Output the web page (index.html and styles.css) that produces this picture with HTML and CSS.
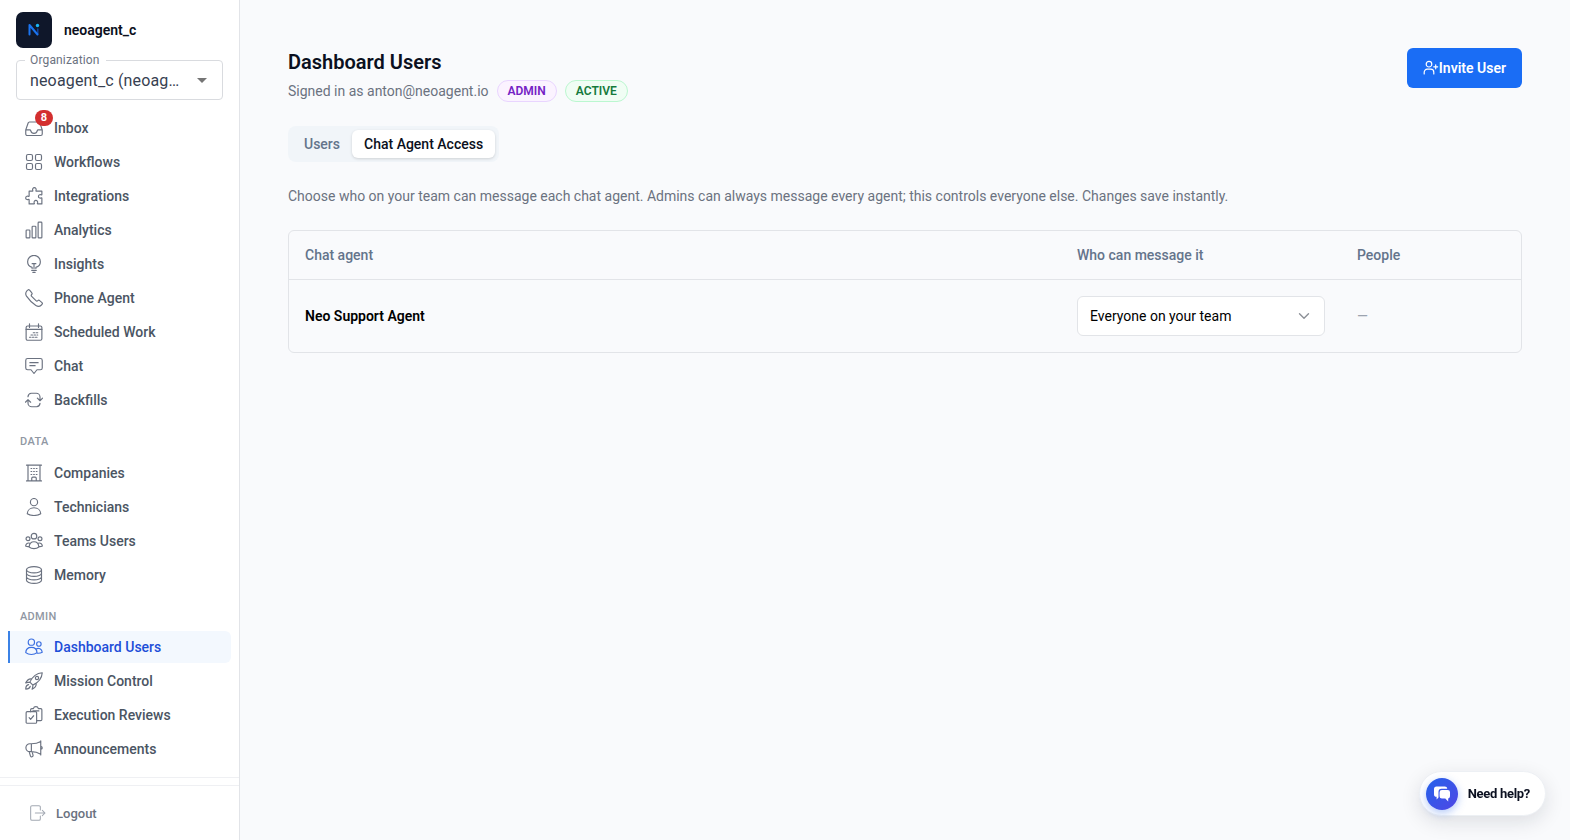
FILE: index.html
```html
<!DOCTYPE html>
<html lang="en">
<head>
  <meta charset="UTF-8">
  <title>Dashboard Users</title>
  <meta name="viewport" content="width=device-width, initial-scale=1.0">
  <link rel="stylesheet" href="styles.css">
</head>
<body>
  <aside class="sidebar">
    <div class="brand">
      <div class="logo">
        <svg width="36" height="36" viewBox="0 0 36 36" fill="none">
          <path d="M21.800 22v-5" stroke="#12409a" stroke-width="1.5"/>
          <path d="M13.500 22.500V13l8 9.500" stroke="#1a74f0" stroke-width="2"/>
          <circle cx="21.500" cy="13.500" r="1.700" fill="#19b5f5" stroke="none"/>
        </svg>
      </div>
      <span class="brand-name">neoagent_c</span>
    </div>

    <div class="org-select">
      <span class="org-label">Organization</span>
      <span class="org-value">neoagent_c (neoag…</span>
      <span class="org-arrow"></span>
    </div>

    <nav class="nav">
      <a class="nav-item">
        <svg class="icon" viewBox="0 0 24 24"><path d="M1 14.500 4.200 5.400A2 2 0 0 1 6 4h12a2 2 0 0 1 1.800 1.400L23 14.500V20a2 2 0 0 1-2 2H3a2 2 0 0 1-2-2zM1 14.500h5.500c.8 0 1 .5 1.200 1.200a4.400 4.400 0 0 0 8.600 0c.2-.7.4-1.200 1.200-1.200H23"/></svg>
        <span class="badge">8</span>
        Inbox
      </a>
      <a class="nav-item">
        <svg class="icon" viewBox="0 0 24 24"><rect x="2" y="2" width="8" height="8" rx="2"/><rect x="14" y="2" width="8" height="8" rx="2"/><rect x="2" y="14" width="8" height="8" rx="2"/><rect x="14" y="14" width="8" height="8" rx="2"/></svg>
        Workflows
      </a>
      <a class="nav-item">
        <svg class="icon" viewBox="0 0 24 24"><path d="M5.500 5.500H10c.7 0 .6-.7.300-1.200a2.400 2.400 0 1 1 4.400 0c-.3.500-.4 1.200.3 1.200h7.500V10c0 .7-.7.600-1.200.3a2.400 2.400 0 1 0 0 4.400c.5-.3 1.200-.4 1.200.3v7.500H17c-.7 0-.6-.7-.3-1.200a2.400 2.400 0 1 0-4.400 0c.3.500.4 1.200-.3 1.200H5.500V17c0-.7-.7-.6-1.200-.3a2.400 2.400 0 1 1 0-4.400c.5.300 1.200.4 1.200-.3z"/></svg>
        Integrations
      </a>
      <a class="nav-item">
        <svg class="icon" viewBox="0 0 24 24"><rect x="1.500" y="12" width="5" height="10.500" rx="1"/><rect x="9.500" y="7" width="5" height="15.500" rx="1"/><rect x="17.500" y="1.500" width="5" height="21" rx="1"/></svg>
        Analytics
      </a>
      <a class="nav-item">
        <svg class="icon" viewBox="0 0 24 24"><path d="M9.500 18v-1.500C6 15.500 3.500 12.500 3.500 9a8.500 8.500 0 0 1 17 0c0 3.500-2.500 6.500-6 7.500V18M12 18v-6M9.500 11.500h5M9 20.500h6M10.500 23.200h3"/></svg>
        Insights
      </a>
      <a class="nav-item">
        <svg class="icon" viewBox="0 0 24 24"><path d="m14.500 22 .1.100a6 6 0 0 0 7.300-.8l.7-.7a1.800 1.800 0 0 0 0-2.500l-3-2.600a1.800 1.800 0 0 0-2.500 0 1.800 1.800 0 0 1-2.500 0L8.900 9.800a1.800 1.800 0 0 1 0-2.500 1.800 1.800 0 0 0 0-2.500L6.100 1.500a1.800 1.800 0 0 0-2.500 0l-.8.700a6 6 0 0 0-.8 7.300A47 47 0 0 0 14.500 22z"/></svg>
        Phone Agent
      </a>
      <a class="nav-item">
        <svg class="icon" viewBox="0 0 24 24"><rect x="1.500" y="4" width="21" height="19" rx="2"/><path d="M1.500 8.500h21M6 1v5M18 1v5"/><path d="M11 13h2M15 13h2M8 16h2M12 16h2M16 16h1M6 19h2M10 19h2M14 19h2"/></svg>
        Scheduled Work
      </a>
      <a class="nav-item">
        <svg class="icon" viewBox="0 0 24 24"><path d="M3.500 2h17A2.500 2.500 0 0 1 23 4.500v10a2.500 2.500 0 0 1-2.500 2.500H16l-4 5-4-5H3.500A2.500 2.500 0 0 1 1 14.500v-10A2.500 2.500 0 0 1 3.500 2zM6.500 7.500h11M6.500 11.500h7"/></svg>
        Chat
      </a>
      <a class="nav-item">
        <svg class="icon" viewBox="0 0 24 24"><path d="M4 7.500A5 5 0 0 1 8.500 3H15a5 5 0 0 1 5 5v4.500M16.500 9.500l3.500 3.500 3.500-3.500M20 16.500a5 5 0 0 1-4.500 4.500H9a5 5 0 0 1-5-5v-4.500M.5 15 4 11.500 7.500 15"/></svg>
        Backfills
      </a>

      <div class="nav-heading">DATA</div>
      <a class="nav-item">
        <svg class="icon" viewBox="0 0 24 24"><path d="M4 1.500v21M20 1.500v21M2 1.500h20M2 22.500h20M9 22.500V19a1.500 1.500 0 0 1 1.500-1.500h3A1.500 1.500 0 0 1 15 19v3.500"/><path d="M8 6h1M11.500 6h1M15 6h1M8 10h1M11.500 10h1M15 10h1M8 14h1M11.500 14h1M15 14h1"/></svg>
        Companies
      </a>
      <a class="nav-item">
        <svg class="icon" viewBox="0 0 24 24"><circle cx="12" cy="5.500" r="4.800"/><path d="M3 21c.3-5 4.300-8 9-8s8.700 3 9 8c-2.500 1.500-5.500 2.300-9 2.300S5.500 22.500 3 21z"/></svg>
        Technicians
      </a>
      <a class="nav-item">
        <svg class="icon" viewBox="0 0 24 24"><circle cx="12" cy="5.500" r="3.700"/><circle cx="4" cy="9" r="2.600"/><circle cx="20" cy="9" r="2.600"/><path d="M5.500 20c.3-4.500 3-7 6.500-7s6.200 2.500 6.500 7c-3.500 3-9.500 3-13 0zM6.300 15C3.500 14 1.300 15.500.8 18.700c1.200.7 2.800 1 4.700.8M17.700 15c2.800-1 5 .5 5.500 3.700-1.200.7-2.800 1-4.700.8"/></svg>
        Teams Users
      </a>
      <a class="nav-item">
        <svg class="icon" viewBox="0 0 24 24"><ellipse cx="12" cy="5" rx="10" ry="4.200"/><path d="M2 5v14c0 2.300 4.500 4.200 10 4.200s10-1.900 10-4.200V5M2 9.700c0 2.300 4.500 4.200 10 4.200s10-1.900 10-4.200M2 14.400c0 2.300 4.500 4.200 10 4.200s10-1.900 10-4.200"/></svg>
        Memory
      </a>

      <div class="nav-heading admin">ADMIN</div>
      <a class="nav-item active">
        <svg class="icon" viewBox="0 0 24 24"><circle cx="8.500" cy="5.500" r="4.200"/><circle cx="18.500" cy="8" r="3"/><path d="M1 19.500c.2-4.500 3.300-7 7.500-7s7.300 2.500 7.500 7c-4 3.300-11 3.300-15 0zM14.500 14.700c4-2.200 8-.3 8.500 4.300-2 1.200-4.300 1.500-7 1.200"/></svg>
        Dashboard Users
      </a>
      <a class="nav-item">
        <svg class="icon" viewBox="0 0 24 24"><path d="M6.500 13.500C10 6 15.500 1.500 23 1c-.5 7.500-5 13-12.500 16.500zM9.200 9.300C6 8.500 3 10.500 1 14.500c2-.8 3.700-1 5.500-1M14.700 14.800c.8 3.200-1.200 6.200-5.200 8.200.8-2 1-3.700 1-5.500M4.800 16.800c-2.500.5-3.800 2.700-3.800 6 3 0 5.300-1.300 6-3.800"/><circle cx="16" cy="8" r="2.200"/></svg>
        Mission Control
      </a>
      <a class="nav-item">
        <svg class="icon" viewBox="0 0 24 24"><rect x="1.500" y="7.500" width="14" height="15.500" rx="1.500"/><path d="m5.500 15.500 2 2.200 4-4.700M7.500 7.500V5A1.500 1.500 0 0 1 9 3.500h2.200a3.400 3.400 0 0 1 6.600 0H21A1.500 1.500 0 0 1 22.500 5v13a1.500 1.500 0 0 1-1.500 1.500h-5.500M10.500 6.500h8"/></svg>
        Execution Reviews
      </a>
      <a class="nav-item">
        <svg class="icon" viewBox="0 0 24 24"><path d="M8.500 5H6.500a5.300 5.300 0 0 0 0 10.600h2c4.500 0 8.500 1 12.500 3.400V2c-4 2.300-8 3-12.500 3zM8.500 5v10.600M21 1v19M21 8.500c1.500.3 2 1 2 2s-.5 1.700-2 2M5.500 15.600l1.800 6a1.900 1.900 0 0 0 3.500-1.200L9.500 15.800"/></svg>
        Announcements
      </a>
    </nav>

    <div class="sidebar-footer">
      <a class="logout">
        <svg class="icon" viewBox="0 0 24 24"><path d="M15.500 7.500V3a2 2 0 0 0-2-2H3a2 2 0 0 0-2 2v18a2 2 0 0 0 2 2h10.500a2 2 0 0 0 2-2v-4.500M8 12h14.500M18.500 8l4 4-4 4"/></svg>
        Logout
      </a>
    </div>
  </aside>

  <main class="main">
    <header class="page-header">
      <div>
        <h1>Dashboard Users</h1>
        <div class="signed-in">
          <span>Signed in as anton@neoagent.io</span>
          <span class="chip chip-admin">ADMIN</span>
          <span class="chip chip-active">ACTIVE</span>
        </div>
      </div>
      <button class="invite-btn">
        <svg width="16" height="16" viewBox="0 0 16 16"><circle cx="6" cy="4.200" r="2.800"/><path d="M1.200 14v-1.800a3 3 0 0 1 3-3h3.600a3 3 0 0 1 3 3V14M12.700 4.800v4M10.700 6.800h4"/></svg>
        Invite User
      </button>
    </header>

    <div class="tabs">
      <button class="tab">Users</button>
      <button class="tab selected">Chat Agent Access</button>
    </div>

    <p class="description">Choose who on your team can message each chat agent. Admins can always message every agent; this controls everyone else. Changes save instantly.</p>

    <div class="table">
      <div class="row row-head">
        <div>Chat agent</div>
        <div>Who can message it</div>
        <div>People</div>
      </div>
      <div class="row row-body">
        <div class="agent-name">Neo Support Agent</div>
        <div>
          <div class="select">
            Everyone on your team
            <svg width="16" height="16" viewBox="0 0 16 16"><path d="m3.500 5.800 4.500 4.500 4.500-4.500"/></svg>
          </div>
        </div>
        <div class="empty">—</div>
      </div>
    </div>
  </main>

  <button class="help">
    <span class="help-icon">
      <svg width="18" height="18" viewBox="0 0 18 18"><path d="M3.500 1.500h8.300a2.500 2.500 0 0 1 2.500 2.300H8.500A3 3 0 0 0 5.500 6.800v5.700L3.600 14.500v-2.700A2.600 2.600 0 0 1 1 9.200V4a2.500 2.500 0 0 1 2.500-2.500z"/><path d="M8.900 4.900h5.800A2.300 2.300 0 0 1 17 7.200v4a2.300 2.300 0 0 1-1.800 2.200v3l-2.900-2.900H8.900a2.300 2.300 0 0 1-2.300-2.300v-4a2.300 2.300 0 0 1 2.300-2.300z"/></svg>
    </span>
    Need help?
  </button>
</body>
</html>
```

FILE: styles.css
```css
* {
  box-sizing: border-box;
}
body {
  margin: 0;
  height: 840px;
  display: flex;
  overflow: hidden;
  font-family: Roboto, "Liberation Sans", sans-serif;
  font-size: 14px;
  color: #0b1020;
  background: #f9fafc;
}
button {
  font-family: inherit;
  border: none;
  cursor: pointer;
}
svg {
  fill: none;
  stroke: currentColor;
  stroke-linecap: round;
  stroke-linejoin: round;
}

/* Sidebar */
.sidebar {
  width: 240px;
  flex-shrink: 0;
  display: flex;
  flex-direction: column;
  background: #fff;
  border-right: 1px solid #e2e4e8;
}
.brand {
  display: flex;
  align-items: center;
  gap: 12px;
  padding: 12px 16px;
}
.logo {
  width: 36px;
  height: 36px;
  border-radius: 7px;
  background: #0f172a;
}
.logo svg {
  display: block;
}
.brand-name {
  font-weight: 600;
  font-size: 14px;
}
.org-select {
  position: relative;
  display: flex;
  align-items: center;
  justify-content: space-between;
  height: 40px;
  margin: 0 16px 12px;
  padding: 0 15px 0 13px;
  border: 1px solid #d9dbdf;
  border-radius: 4px;
}
.org-label {
  position: absolute;
  top: -8px;
  left: 8px;
  padding: 0 6px 0 5px;
  font-size: 12px;
  line-height: 14px;
  letter-spacing: 0.15px;
  color: #6b7280;
  background: #fff;
}
.org-value {
  font-size: 16px;
  letter-spacing: 0.15px;
  color: #374151;
  white-space: nowrap;
}
.org-arrow {
  border: 5px solid transparent;
  border-top-color: #757575;
  border-bottom: none;
}
.nav {
  flex: 1;
  display: flex;
  flex-direction: column;
  gap: 2px;
  padding: 0 8px;
  border-bottom: 1px solid #eff0f3;
}
.nav-item {
  position: relative;
  display: flex;
  align-items: center;
  gap: 11px;
  height: 32px;
  padding-left: 15px;
  border-left: 2px solid transparent;
  border-radius: 0 6px 6px 0;
  font-weight: 500;
  color: #4b5563;
}
.nav-item.active {
  color: #1d4ed8;
  background: #f3f8fe;
  border-left-color: #3b82e6;
}
.icon {
  width: 18px;
  height: 18px;
  stroke-width: 1.55;
  color: #6b7280;
}
.active .icon {
  color: #3b6fe0;
}
.badge {
  position: absolute;
  top: -2px;
  left: 25px;
  width: 18px;
  height: 16px;
  border-radius: 8px;
  background: #d32f2f;
  color: #fff;
  font-size: 11px;
  font-weight: 700;
  line-height: 16px;
  text-align: center;
}
.nav-heading {
  height: 37px;
  padding: 16px 12px 0;
  font-size: 11px;
  font-weight: 500;
  line-height: 16px;
  letter-spacing: 0.4px;
  color: #9097a3;
}
.nav-heading.admin {
  height: 36px;
  letter-spacing: 0.3px;
}
.sidebar-footer {
  height: 55px;
  margin-top: 7px;
  padding: 0 30px;
  border-top: 1px solid #eff0f3;
  display: flex;
  align-items: center;
}
.logout {
  display: flex;
  align-items: center;
  gap: 10px;
  font-size: 13px;
  font-weight: 500;
  color: #6b7280;
}
.logout .icon {
  width: 16px;
  height: 16px;
  color: #a3a9b3;
}

/* Page */
.main {
  flex: 1;
  padding: 48px 48px 0;
}
.page-header {
  display: flex;
  justify-content: space-between;
  align-items: flex-start;
}
h1 {
  margin: 0;
  font-size: 20px;
  line-height: 28px;
  font-weight: 600;
}
.signed-in {
  display: flex;
  align-items: center;
  gap: 8px;
  margin-top: 4px;
  color: #6b7280;
}
.chip {
  height: 22px;
  padding: 0 10px;
  border: 1px solid;
  border-radius: 11px;
  font-size: 12px;
  font-weight: 600;
  line-height: 20px;
}
.chip-admin {
  color: #7421c4;
  background: #fbf3ff;
  border-color: #e9d5ff;
}
.chip-active {
  color: #157a3c;
  background: #f0fdf4;
  border-color: #bbf7d0;
}
.invite-btn {
  display: flex;
  align-items: center;
  height: 40px;
  padding: 0 16px;
  border-radius: 6px;
  background: #1a6df5;
  color: #fff;
  font-size: 14px;
  font-weight: 600;
}
.invite-btn svg {
  stroke-width: 1.2;
}
.tabs {
  display: inline-flex;
  margin-top: 24px;
  padding: 4px;
  border-radius: 8px;
  background: #f1f5f9;
}
.tab {
  height: 28px;
  padding: 0 12px;
  border-radius: 6px;
  background: none;
  font-size: 14px;
  font-weight: 500;
  color: #64748b;
}
.tab.selected {
  background: #fff;
  color: #0b1020;
  box-shadow: 0 1px 3px rgba(0, 0, 0, 0.15);
}
.description {
  margin: 24px 0;
  line-height: 20px;
  color: #6b7280;
}
.table {
  border: 1px solid #e2e4e8;
  border-radius: 6px;
}
.row {
  display: grid;
  grid-template-columns: 1fr 280px 180px;
  align-items: center;
}
.row > div {
  padding: 0 16px;
}
.row-head {
  height: 49px;
  border-bottom: 1px solid #e2e4e8;
  font-weight: 500;
  color: #64748b;
}
.row-body {
  height: 72px;
}
.agent-name {
  font-weight: 600;
  color: #000;
}
.select {
  display: flex;
  align-items: center;
  justify-content: space-between;
  height: 40px;
  padding: 0 12px;
  border: 1px solid #e2e4e8;
  border-radius: 6px;
  background: #fff;
  color: #000;
}
.select svg {
  color: #8c9097;
  stroke-width: 1.4;
}
.row > .empty {
  color: #9ca3af;
}

/* Floating help button */
.help {
  position: fixed;
  right: 24px;
  bottom: 24px;
  display: flex;
  align-items: center;
  gap: 10px;
  height: 45px;
  padding: 0 15px 0 6px;
  border: 1px solid #edf0f4;
  border-radius: 23px;
  background: #fff;
  box-shadow: 0 6px 20px rgba(15, 23, 42, 0.12);
  font-size: 13px;
  font-weight: 700;
  letter-spacing: -0.3px;
  color: #0b1020;
}
.help-icon {
  display: flex;
  align-items: center;
  justify-content: center;
  width: 32px;
  height: 32px;
  border-radius: 50%;
  background: linear-gradient(135deg, #2563eb, #4f46e5);
  box-shadow: 0 3px 8px rgba(37, 99, 235, 0.35);
}
.help-icon svg {
  fill: #fff;
  stroke: none;
}
```
